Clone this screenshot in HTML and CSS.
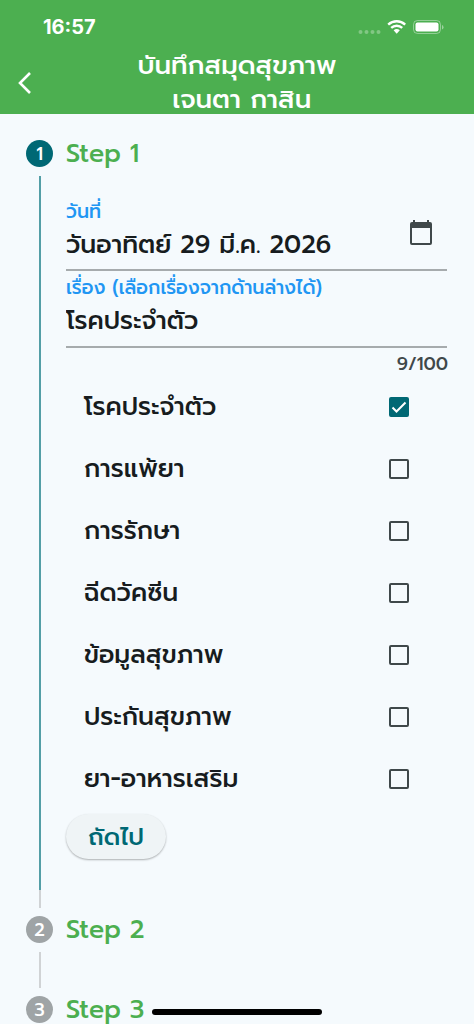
FILE: index.html
```html
<!DOCTYPE html>
<html lang="th">
<head>
<meta charset="utf-8">
<meta name="viewport" content="width=device-width, initial-scale=1">
<title>บันทึกสมุดสุขภาพ</title>
<link rel="stylesheet" href="styles.css">
</head>
<body>
<header class="app-header">
  <div class="status-bar">
    <span class="clock">16:57</span>
    <svg class="status-icons" width="88" height="18" viewBox="0 0 88 18" aria-hidden="true">
      <g fill="#fff" fill-opacity=".3"><circle cx="4.500" cy="14" r="2"/><circle cx="10.500" cy="14" r="2"/><circle cx="16.500" cy="14" r="2"/><circle cx="22.500" cy="14" r="2"/></g>
      <g fill="none" stroke="#fff" stroke-width="2.400"><path d="M32.200 6.600a12.600 12.600 0 0 1 17 0"/><path d="M35.200 9.900a8 8 0 0 1 11 0"/></g>
      <path d="M37.600 12.300a4.600 4.600 0 0 1 6.200 0l-3.100 3.400z" fill="#fff"/>
      <rect x="57.500" y="2.500" width="27" height="13" rx="4" fill="none" stroke="#fff" stroke-opacity=".4"/>
      <rect x="59.500" y="4.500" width="23" height="9" rx="2" fill="#fff"/>
      <path d="M86 7v4.500q1.500-.6 1.500-2.250T86 7z" fill="#fff" fill-opacity=".45"/>
    </svg>
  </div>
  <div class="title-bar">
    <button class="back" type="button" aria-label="ย้อนกลับ">
      <svg width="14" height="24" viewBox="0 0 14 24"><path d="M12 2L2 12l10 10" fill="none" stroke="#fff" stroke-width="2.600"/></svg>
    </button>
    <h1 class="title">บันทึกสมุดสุขภาพ<br>&nbsp;เจนตา กาสิน</h1>
  </div>
</header>
<main>
  <ol class="stepper">
    <li class="step">
      <div class="rail"><span class="badge active">1</span><span class="line done"></span><span class="line tail"></span></div>
      <div class="step-body">
        <h2 class="step-title">Step 1</h2>
        <form class="form">
          <div class="field with-icon">
            <div class="field-main">
              <label class="label" for="date">วันที่</label>
              <input class="input" id="date" type="text" value="วันอาทิตย์ 29 มี.ค. 2026">
            </div>
            <button class="calendar" type="button" aria-label="เลือกวันที่">
              <svg width="24" height="26" viewBox="0 0 24 26"><path d="M4 0h2v2h12V0h2v2h1a2 2 0 0 1 2 2v19a2 2 0 0 1-2 2H3a2 2 0 0 1-2-2V4a2 2 0 0 1 2-2h1zM3 8v15h18V8z" fill="#3f484a" fill-rule="evenodd"/></svg>
            </button>
          </div>
          <div class="field">
            <div class="field-main">
              <label class="label" for="topic">เรื่อง (เลือกเรื่องจากด้านล่างได้)</label>
              <input class="input" id="topic" type="text" maxlength="100" value="โรคประจำตัว">
            </div>
          </div>
          <div class="counter">9/100</div>
          <div class="options">
            <label class="option">โรคประจำตัว<input class="check" type="checkbox" checked></label>
            <label class="option">การแพ้ยา<input class="check" type="checkbox"></label>
            <label class="option">การรักษา<input class="check" type="checkbox"></label>
            <label class="option">ฉีดวัคซีน<input class="check" type="checkbox"></label>
            <label class="option">ข้อมูลสุขภาพ<input class="check" type="checkbox"></label>
            <label class="option">ประกันสุขภาพ<input class="check" type="checkbox"></label>
            <label class="option">ยา-อาหารเสริม<input class="check" type="checkbox"></label>
          </div>
          <button class="next" type="button">ถัดไป</button>
        </form>
      </div>
    </li>
    <li class="step collapsed">
      <div class="rail"><span class="badge">2</span><span class="line"></span></div>
      <div class="step-body"><h2 class="step-title">Step 2</h2></div>
    </li>
    <li class="step last">
      <div class="rail"><span class="badge">3</span></div>
      <div class="step-body"><h2 class="step-title">Step 3</h2></div>
    </li>
  </ol>
</main>
<div class="home-indicator"></div>
</body>
</html>
```
FILE: styles.css
```css
* {
  box-sizing: border-box;
}

body {
  margin: 0;
  background: #f5fafd;
  color: #171c1e;
  font-family: Prompt, "Noto Sans Thai", "Noto Sans", sans-serif;
  font-weight: 500;
}

button,
input {
  font: inherit;
  color: inherit;
}

.app-header {
  background: #4caf50;
  color: #fff;
}

.status-bar {
  display: flex;
  justify-content: space-between;
  align-items: center;
  height: 49px;
  padding: 5px 30px 0 43px;
}

.clock {
  font: 700 20px/24px Inter, sans-serif;
}

.title-bar {
  display: grid;
  grid-template-columns: 50px 1fr 50px;
  align-items: center;
  height: 65px;
}

.back {
  display: flex;
  padding: 6px 18px;
  border: 0;
  background: none;
}

.title {
  margin: 0;
  font-size: 26px;
  font-weight: 500;
  line-height: 34px;
  text-align: center;
}

.stepper {
  margin: 0;
  padding: 26px 26px 0;
  list-style: none;
}

.step {
  display: grid;
  grid-template-columns: 27px 1fr;
  column-gap: 13px;
}

.collapsed {
  height: 80px;
}

.rail {
  display: flex;
  flex-direction: column;
  align-items: center;
}

.badge {
  display: flex;
  flex: none;
  align-items: center;
  justify-content: center;
  width: 27px;
  height: 27px;
  margin-bottom: 9px;
  border-radius: 50%;
  background: #9fa4a6;
  color: #fff;
  font-size: 18px;
  line-height: 24px;
}

.last .badge {
  margin-bottom: 0;
}

.active {
  background: #006874;
}

.line {
  flex: 1;
  width: 2px;
  margin-bottom: 8px;
  background: #d0d3d5;
}

.done {
  margin-bottom: 0;
  background: #539ea6;
}

.tail {
  flex: none;
  height: 18px;
}

.step-title {
  margin: 0;
  color: #4caf50;
  font-size: 25px;
  font-weight: 500;
  line-height: 28px;
}

.form {
  padding: 28px 0 57px;
}

.form,
.options {
  display: flex;
  flex-direction: column;
}

.field {
  display: flex;
  align-items: center;
  width: calc(100% - 1px);
  height: 77px;
  border-bottom: 2px solid #a6abad;
}

.with-icon {
  height: 75px;
}

.field-main {
  flex: 1;
  display: flex;
  flex-direction: column;
  min-width: 0;
  padding-bottom: 4px;
}

.label {
  color: #2196f3;
  font-size: 19px;
  line-height: 28px;
}

.input {
  width: 100%;
  height: 38px;
  padding: 0;
  border: 0;
  outline: 0;
  background: none;
  font-size: 25px;
  line-height: 38px;
}

.calendar {
  display: flex;
  padding: 0 14px;
  border: 0;
  background: none;
}

.counter {
  height: 28px;
  color: #3f484a;
  font-size: 18px;
  line-height: 32px;
  text-align: right;
}

.option {
  display: flex;
  align-items: center;
  justify-content: space-between;
  height: 62px;
  padding: 0 39px 0 18px;
  font-size: 25px;
  line-height: 36px;
}

.check {
  flex: none;
  width: 20px;
  height: 20px;
  margin: 0;
  border: 2px solid #3f484a;
  border-radius: 2px;
  appearance: none;
}

.check:checked {
  border-color: #006874;
  background: #006874 url("data:image/svg+xml,%3Csvg xmlns='http://www.w3.org/2000/svg' viewBox='0 0 16 16'%3E%3Cpath d='M1.500 8.500l4 4 9-9' fill='none' stroke='white' stroke-width='2'/%3E%3C/svg%3E") center / 16px no-repeat;
}

.next {
  align-self: flex-start;
  width: 100px;
  height: 45px;
  margin-top: 4px;
  padding: 0;
  border: 0;
  border-radius: 23px;
  background: #eff4f6;
  box-shadow: 0 1px 2px rgba(0, 0, 0, .3);
  color: #006874;
  font-size: 24px;
  line-height: 44px;
}

.home-indicator {
  position: fixed;
  bottom: 9px;
  left: 50%;
  width: 170px;
  height: 6px;
  border-radius: 3px;
  background: #000;
  transform: translateX(-50%);
}
```
